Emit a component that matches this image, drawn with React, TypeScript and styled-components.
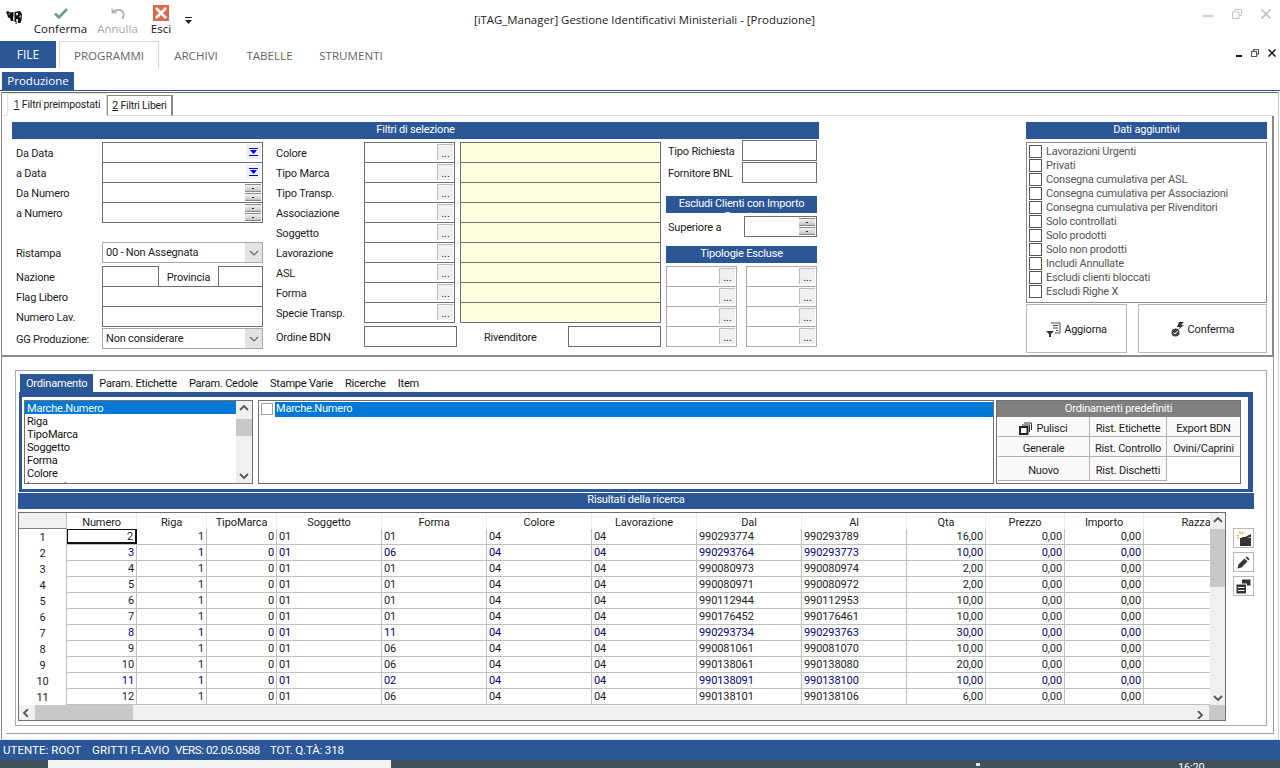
import React from "react";
import styled, { createGlobalStyle } from "styled-components";

const BLUE = "#2b5797";
const LINE = "#707070";
const WIDE_FONT = `"Open Sans", "Liberation Sans", sans-serif`;

const GlobalStyle = createGlobalStyle`
  html, body {
    margin: 0;
    padding: 0;
    background: #fff;
  }
  body {
    font-family: Roboto, "Liberation Sans", sans-serif;
    font-size: 11px;
    letter-spacing: -0.2px;
    color: #1c1c1c;
  }
  * {
    box-sizing: border-box;
  }
`;

const S = {
  Window: styled.div`
    width: 1280px;
    height: 768px;
    display: flex;
    flex-direction: column;
    overflow: hidden;
    background: #fff;
  `,
  TitleBar: styled.div`
    height: 41px;
    flex: none;
    position: relative;
    display: flex;
    align-items: flex-start;
    padding: 5px 0 0 6px;
    letter-spacing: 0;
  `,
  Logo: styled.div`
    width: 18px;
    margin: 6px 10px 0 0;
  `,
  QuickButton: styled.div<{ $off?: boolean; $w: number }>`
    width: ${(p) => p.$w}px;
    display: flex;
    flex-direction: column;
    align-items: center;
    height: 31px;
    justify-content: space-between;
    font-family: ${WIDE_FONT};
    line-height: 14px;
    font-size: 11.5px;
    white-space: nowrap;
    color: ${(p) => (p.$off ? "#a8a8a8" : "#111")};
  `,
  IconSlot: styled.div`
    height: 16px;
    display: flex;
    align-items: center;
    justify-content: center;
  `,
  Caret: styled.div`
    margin: 10px 0 0 11px;
    width: 8px;
  `,
  Title: styled.div`
    position: absolute;
    left: 0;
    right: 0;
    top: 12px;
    text-align: center;
    font-family: ${WIDE_FONT};
    font-size: 11.4px;
    padding-left: 9px;
    color: #222;
  `,
  WinButtons: styled.div`
    position: absolute;
    right: 9px;
    top: 9px;
    display: flex;
    gap: 19px;
    align-items: center;
  `,
  RibbonTabs: styled.div`
    height: 27px;
    flex: none;
    display: flex;
    align-items: stretch;
    position: relative;
    font-family: ${WIDE_FONT};
    letter-spacing: 0;
  `,
  FileTab: styled.div`
    width: 56px;
    background: ${BLUE};
    color: #fff;
    font-size: 12px;
    display: flex;
    align-items: center;
    justify-content: center;
    margin-right: 3px;
    padding-bottom: 1px;
  `,
  RibbonTab: styled.div<{ $on?: boolean; $w: number }>`
    width: ${(p) => p.$w}px;
    display: flex;
    align-items: center;
    justify-content: center;
    font-size: 11.6px;
    color: #666;
    border: 1px solid ${(p) => (p.$on ? "#d8d8d8" : "transparent")};
    border-bottom: none;
  `,
  MdiBar: styled.div`
    height: 23px;
    flex: none;
    display: flex;
    align-items: flex-end;
    padding: 0 0 0 2px;
    border-bottom: 1px solid ${BLUE};
  `,
  MdiTab: styled.div`
    width: 72px;
    height: 18px;
    background: ${BLUE};
    color: #fff;
    font-family: ${WIDE_FONT};
    font-size: 11.5px;
    letter-spacing: 0;
    line-height: 17px;
    text-align: center;
  `,
  MdiButtons: styled.div`
    position: absolute;
    right: 4px;
    top: 8px;
    display: flex;
    gap: 9px;
    align-items: flex-end;
  `,
  Form: styled.div`
    flex: 1;
    min-height: 0;
    display: flex;
    flex-direction: column;
    margin: 1px 1px 0 1px;
    padding: 0 4px 0 1px;
    border-top: 1px solid #6e6e6e;
    border-left: 1px solid #8a8a8a;
    border-right: 1px solid #d0d0d0;
    border-bottom: 1px solid #e4e4e4;
  `,
  PageTabs: styled.div`
    height: 23px;
    flex: none;
    display: flex;
    padding: 0 0 0 4px;
    border-bottom: 1px solid #e0e0e0;
  `,
  PageTab: styled.div<{ $on?: boolean; $w: number }>`
    width: ${(p) => p.$w}px;
    height: ${(p) => (p.$on ? 23 : 21)}px;
    margin-top: ${(p) => (p.$on ? 0 : 2)}px;
    line-height: ${(p) => (p.$on ? 21 : 19)}px;
    text-align: center;
    white-space: nowrap;
    font-size: 10.5px;
    background: #fff;
    border: 1px solid ${(p) => (p.$on ? "#e0e0e0" : "#8a8a8a")};
    border-right-width: ${(p) => (p.$on ? 1 : 2)}px;
    border-bottom-color: ${(p) => (p.$on ? "#fff" : "#e0e0e0")};
  `,
  FilterPanel: styled.div`
    height: 241px;
    flex: none;
    display: flex;
    justify-content: space-between;
    padding: 6px 5px 0 10px;
    border-right: 2px solid #8a8a8a;
    border-bottom: 2px solid #8a8a8a;
    margin-left: -1px;
  `,
  FilterMain: styled.div`
    width: 807px;
    display: flex;
    flex-direction: column;
  `,
  Band: styled.div<{ $lh?: number; $pt?: number; $mt?: number; $mr?: number }>`
    height: 17px;
    flex: none;
    background: ${BLUE};
    color: #fff;
    font-size: 11px;
    line-height: ${(p) => p.$lh ?? 15}px;
    padding-top: ${(p) => p.$pt ?? 0}px;
    margin-top: ${(p) => p.$mt ?? 0}px;
    margin-right: ${(p) => p.$mr ?? 0}px;
    text-align: center;
    overflow: hidden;
  `,
  FilterCols: styled.div`
    display: flex;
    flex: 1;
  `,
  ColA: styled.div`
    width: 251px;
    display: flex;
    flex-direction: column;
    padding-top: 3px;
  `,
  Row: styled.div<{ $h?: number; $mt?: number }>`
    height: ${(p) => p.$h ?? 20}px;
    margin-top: ${(p) => p.$mt ?? 0}px;
    display: flex;
    flex: none;
  `,
  Label: styled.div<{ $w?: number; $pl?: number }>`
    width: ${(p) => p.$w ?? 90}px;
    flex: none;
    padding-left: ${(p) => p.$pl ?? 4}px;
    line-height: 24px;
    white-space: nowrap;
  `,
  Field: styled.div<{ $w?: number; $bg?: string }>`
    ${(p) => (p.$w ? `width: ${p.$w}px; flex: none;` : "flex: 1;")}
    height: 21px;
    border: 1px solid ${LINE};
    background: ${(p) => p.$bg ?? "#fff"};
    display: flex;
    justify-content: flex-end;
    padding: 1px;
    & + & {
      margin-left: -1px;
    }
  `,
  DateDrop: styled.div`
    width: 15px;
    height: 15px;
    background: #eef1f6;
    display: flex;
    align-items: center;
    justify-content: center;
  `,
  Spin: styled.div`
    width: 16px;
    height: 17px;
    display: flex;
    flex-direction: column;
    gap: 1px;
    span {
      flex: 1;
      background: linear-gradient(#f4f4f4, #c4c4c4);
      border: 1px solid #8a8a8a;
      border-width: 1px 0 1px 0;
      position: relative;
    }
    span::after {
      content: "";
      position: absolute;
      left: 7px;
      top: 3px;
      width: 2px;
      height: 1px;
      background: #222;
    }
  `,
  Dots: styled.div`
    width: 16px;
    height: 16px;
    background: #f0f0f0;
    border-top: 1px solid #bdbdbd;
    border-left: 1px solid #bdbdbd;
    font-size: 11px;
    letter-spacing: 0;
    line-height: 17px;
    text-align: center;
    color: #222;
  `,
  Combo: styled.div`
    flex: 1;
    height: 21px;
    border: 1px solid #a8a8a8;
    display: flex;
    align-items: center;
    justify-content: space-between;
    padding-left: 3px;
  `,
  ComboArrow: styled.div`
    width: 17px;
    height: 19px;
    background: #e3e3e3;
    display: flex;
    align-items: center;
    justify-content: center;
  `,
  Middle: styled.div`
    flex: none;
    text-align: center;
    line-height: 24px;
    width: 59px;
  `,
  ColB: styled.div`
    width: 197px;
    display: flex;
    flex-direction: column;
    padding: 3px 0 0 9px;
  `,
  ColC: styled.div`
    width: 206px;
    display: flex;
    flex-direction: column;
    padding: 3px 0 0 0;
  `,
  ColD: styled.div`
    flex: 1;
    display: flex;
    flex-direction: column;
    padding-top: 1px;
  `,
  SmallBand: styled.div`
    margin: 12px 2px 3px 0;
  `,
  TipologieGrid: styled.div`
    display: grid;
    grid-template-columns: 71px 71px;
    justify-content: space-between;
    grid-auto-rows: 20px;
    margin: 3px 2px 0 0;
  `,
  LightField: styled.div`
    height: 21px;
    border: 1px solid #a8a8a8;
    display: flex;
    justify-content: flex-end;
    padding: 1px;
  `,
  Side: styled.div`
    width: 241px;
    display: flex;
    flex-direction: column;
  `,
  CheckBox: styled.div`
    height: 161px;
    margin-top: 3px;
    border: 1px solid #8a8a8a;
    padding: 2px 2px;
    display: flex;
    flex-direction: column;
  `,
  CheckRow: styled.div`
    height: 14px;
    display: flex;
    align-items: flex-start;
    gap: 4px;
    color: #555;
    white-space: nowrap;
  `,
  CheckMark: styled.div`
    width: 13px;
    height: 13px;
    border: 1px solid #555;
    flex: none;
  `,
  SideButtons: styled.div`
    display: flex;
    justify-content: space-between;
    margin-top: 1px;
    height: 49px;
  `,
  SideButton: styled.div<{ $w: number }>`
    width: ${(p) => p.$w}px;
    border: 1px solid #b8b8b8;
    display: flex;
    align-items: center;
    justify-content: center;
    gap: 3px;
    padding-top: 1px;
  `,
  ResultsOuter: styled.div`
    flex: none;
    height: 377px;
    padding: 13px 6px 7px 9px;
    border-bottom: 1px solid #a0a0a0;
    border-right: 1px solid #a0a0a0;
    margin-left: 3px;
    display: flex;
    flex-direction: column;
  `,
  ResultsPanel: styled.div`
    flex: 1;
    border: 1px solid #a8a8a8;
    padding: 3px 13px 0 3px;
    display: flex;
    flex-direction: column;
  `,
  SubTabs: styled.div`
    height: 18px;
    flex: none;
    display: flex;
    padding-left: 1px;
  `,
  SubTab: styled.div<{ $on?: boolean }>`
    padding: 0 6px;
    line-height: 19px;
    background: ${(p) => (p.$on ? BLUE : "transparent")};
    color: ${(p) => (p.$on ? "#fff" : "#111")};
  `,
  SortFrame: styled.div`
    height: 100px;
    flex: none;
    border: solid ${BLUE};
    border-width: 5px 5px 3px 3px;
    padding: 3px 7px 5px 2px;
    display: flex;
  `,
  ListBox: styled.div`
    width: 229px;
    flex: none;
    margin-right: 5px;
    border: 1px solid ${LINE};
    display: flex;
    overflow: hidden;
  `,
  ListItems: styled.div`
    flex: 1;
    padding: 0;
  `,
  ListItem: styled.div<{ $on?: boolean }>`
    height: 13px;
    line-height: 15px;
    padding-left: 2px;
    background: ${(p) => (p.$on ? "#0078d7" : "transparent")};
    color: ${(p) => (p.$on ? "#fff" : "#111")};
  `,
  VScroll: styled.div<{ $thumbTop: number; $thumbH: number }>`
    width: 16px;
    flex: none;
    background: #f0f0f0;
    position: relative;
    display: flex;
    flex-direction: column;
    justify-content: space-between;
    align-items: center;
    padding: 3px 0;
    &::after {
      content: "";
      position: absolute;
      left: 0;
      right: 0;
      top: ${(p) => p.$thumbTop}px;
      height: ${(p) => p.$thumbH}px;
      background: #c8c8c8;
    }
  `,
  Chosen: styled.div`
    width: 736px;
    flex: none;
    margin-right: 2px;
    border: 1px solid ${LINE};
    padding: 1px 0 1px 2px;
    display: flex;
    align-items: flex-start;
  `,
  ChosenCheck: styled.div`
    width: 12px;
    height: 12px;
    border: 1px solid #a0a0a0;
    margin: 1px 2px 0 0;
    flex: none;
  `,
  ChosenItem: styled.div`
    flex: 1;
    height: 15px;
    line-height: 14px;
    background: #0078d7;
    color: #fff;
    padding-left: 1px;
  `,
  Presets: styled.div`
    flex: 1;
    border: 1px solid ${LINE};
    display: flex;
    flex-direction: column;
  `,
  PresetHead: styled.div`
    height: 16px;
    flex: none;
    background: #808080;
    color: #fff;
    text-align: center;
    line-height: 15px;
  `,
  PresetGrid: styled.div`
    display: grid;
    grid-template-columns: 92px 77px 1fr;
    grid-template-rows: 20px 20px 24px;
    padding-left: 1px;
  `,
  PresetCell: styled.div<{ $blank?: boolean }>`
    display: flex;
    align-items: center;
    justify-content: center;
    gap: 4px;
    padding-top: 4px;
    background: #fafafa;
    border-right: 1px solid #b0b0b0;
    border-bottom: 1px solid #b0b0b0;
    &:nth-child(3n) {
      border-right: none;
    }
    ${(p) => (p.$blank ? "border-bottom: none; background: #fff;" : "")}
    white-space: nowrap;
  `,
  ResultsBand: styled.div`
    height: 16px;
    flex: none;
    margin: 1px -1px 0 -1px;
    background: ${BLUE};
    color: #fff;
    text-align: center;
    line-height: 14px;
  `,
  GridArea: styled.div`
    display: flex;
    margin: 3px 0 0 -1px;
    flex: none;
    letter-spacing: -0.1px;
  `,
  GridBox: styled.div`
    width: 1208px;
    height: 209px;
    flex: none;
    border: 1px solid ${LINE};
    display: flex;
    flex-direction: column;
    overflow: hidden;
  `,
  GridMain: styled.div`
    flex: 1;
    min-height: 0;
    display: flex;
  `,
  Table: styled.div`
    width: 1191px;
    flex: none;
    overflow: hidden;
  `,
  TableRow: styled.div<{ $blue?: boolean }>`
    height: 16px;
    display: flex;
    border-bottom: 1px solid #c0c0c0;
    color: ${(p) => (p.$blue ? "#00007f" : "#1c1c1c")};
  `,
  HeadRow: styled.div`
    height: 16px;
    display: flex;
  `,
  HeadCell: styled.div<{ $w: number; $corner?: boolean }>`
    width: ${(p) => p.$w}px;
    flex: none;
    text-align: center;
    line-height: 19px;
    white-space: nowrap;
    overflow: hidden;
    background: ${(p) => (p.$corner ? "#f0f0f0" : "#fff")};
    border-right: 1px solid ${(p) => (p.$corner ? "#c0c0c0" : "#f0f0f0")};
    border-bottom: 1px solid ${(p) => (p.$corner ? "#808080" : "#fff")};
  `,
  RowHead: styled.div<{ $w: number }>`
    width: ${(p) => p.$w}px;
    flex: none;
    text-align: center;
    line-height: 17px;
    color: #1c1c1c;
    background: #fff;
    margin-bottom: -1px;
    z-index: 1;
    border-right: 1px solid #c0c0c0;
  `,
  Cell: styled.div<{ $w: number; $right?: boolean; $focus?: boolean }>`
    width: ${(p) => p.$w}px;
    flex: none;
    line-height: 16px;
    white-space: nowrap;
    text-align: ${(p) => (p.$right ? "right" : "left")};
    padding: 0 ${(p) => (p.$right ? 2 : 0)}px 0 ${(p) => (p.$right ? 0 : 2)}px;
    border-right: 1px solid #c0c0c0;
    ${(p) =>
      p.$focus
        ? "border: 1px solid #111; border-right-width: 2px; border-bottom-width: 2px; line-height: 14px;"
        : ""}
  `,
  HScroll: styled.div`
    height: 15px;
    flex: none;
    background: #f0f0f0;
    display: flex;
    align-items: center;
    position: relative;
    padding: 0 0 0 3px;
  `,
  HThumb: styled.div`
    position: absolute;
    left: 16px;
    top: 0;
    width: 98px;
    height: 15px;
    background: #c8c8c8;
  `,
  HRight: styled.div`
    position: absolute;
    right: 20px;
    top: 4px;
  `,
  HCorner: styled.div`
    position: absolute;
    right: 0;
    top: 0;
    width: 16px;
    height: 15px;
    background: #c8c8c8;
  `,
  ToolColumn: styled.div`
    flex: 1;
    display: flex;
    flex-direction: column;
    gap: 4px;
    padding: 16px 0 0 7px;
  `,
  ToolButton: styled.div`
    width: 21px;
    height: 20px;
    border: 1px solid #b8b8b8;
    display: flex;
    align-items: center;
    justify-content: center;
  `,
  StatusBar: styled.div`
    height: 20px;
    flex: none;
    background: ${BLUE};
    color: #fff;
    font-size: 11.5px;
    line-height: 20px;
    padding-left: 3px;
    display: flex;
    white-space: nowrap;
  `,
  StatusItem: styled.span<{ $w?: number; $ls: number }>`
    ${(p) => (p.$w ? `width: ${p.$w}px;` : "")}
    letter-spacing: ${(p) => p.$ls}px;
  `,
  Taskbar: styled.div`
    height: 8px;
    flex: none;
    background: #3f5159;
    display: flex;
    overflow: hidden;
    position: relative;
    color: #fff;
  `,
  TaskWindow: styled.div`
    width: 343px;
    height: 8px;
    margin-left: 48px;
    background: #f2f2f2;
  `,
  Clock: styled.div`
    position: absolute;
    left: 1178px;
    top: 1px;
    line-height: 14px;
  `,
  TaskMark: styled.div`
    position: absolute;
    left: 976px;
    top: 3px;
    width: 4px;
    height: 3px;
    background: #dfe3e5;
  `,
};

const COLS = [48, 70, 70, 70, 105, 105, 105, 105, 105, 105, 79, 79, 79, 105];
const HEADS = ["", "Numero", "Riga", "TipoMarca", "Soggetto", "Forma", "Colore", "Lavorazione", "Dal", "Al", "Qta", "Prezzo", "Importo", "Razza"];

const ROWS: { n: string; forma: string; dal: string; al: string; qta: string; blue?: boolean }[] = [
  { n: "2", forma: "01", dal: "990293774", al: "990293789", qta: "16,00" },
  { n: "3", forma: "06", dal: "990293764", al: "990293773", qta: "10,00", blue: true },
  { n: "4", forma: "01", dal: "990080973", al: "990080974", qta: "2,00" },
  { n: "5", forma: "01", dal: "990080971", al: "990080972", qta: "2,00" },
  { n: "6", forma: "01", dal: "990112944", al: "990112953", qta: "10,00" },
  { n: "7", forma: "01", dal: "990176452", al: "990176461", qta: "10,00" },
  { n: "8", forma: "11", dal: "990293734", al: "990293763", qta: "30,00", blue: true },
  { n: "9", forma: "06", dal: "990081061", al: "990081070", qta: "10,00" },
  { n: "10", forma: "06", dal: "990138061", al: "990138080", qta: "20,00" },
  { n: "11", forma: "02", dal: "990138091", al: "990138100", qta: "10,00", blue: true },
  { n: "12", forma: "06", dal: "990138101", al: "990138106", qta: "6,00" },
];

const CHECKS = [
  "Lavorazioni Urgenti",
  "Privati",
  "Consegna cumulativa per ASL",
  "Consegna cumulativa per Associazioni",
  "Consegna cumulativa per Rivenditori",
  "Solo controllati",
  "Solo prodotti",
  "Solo non prodotti",
  "Includi Annullate",
  "Escludi clienti bloccati",
  "Escludi Righe X",
];

const LOOKUPS = ["Colore", "Tipo Marca", "Tipo Transp.", "Associazione", "Soggetto", "Lavorazione", "ASL", "Forma", "Specie Transp."];

const Chevron = ({ dir, color = "#555" }: { dir: "up" | "down" | "left" | "right"; color?: string }) => {
  const d = {
    up: "M1 6 L5 2 L9 6",
    down: "M1 2 L5 6 L9 2",
    left: "M6 0 L2 4 L6 8",
    right: "M3 0 L7 4 L3 8",
  }[dir];
  return (
    <svg width="10" height="8" viewBox="0 0 10 8" style={{ zIndex: 1 }}>
      <path d={d} fill="none" stroke={color} strokeWidth="1.8" />
    </svg>
  );
};

const CowLogo = () => (
  <svg width="16" height="13" viewBox="0 0 16 13">
    <path d="M0 1 L2 0 L4 1.5 L7.5 1 L7.5 5 L7 7 L7.5 10 L5 10 L4 7 L2 6.5 L1 3 Z" fill="#111" />
    <path d="M8.5 1 L14 0 L16 3 L15.5 9 L14.5 12 L12 12 L12 8 L10.5 8 L10 11 L8.5 11 L8.5 6 Z" fill="#111" />
    <path d="M10 2 L12 2 L12 4 L10.5 4.5 Z M13.5 5 L15 4 L14.5 6.5 L13.5 6.5 Z M2.5 2 L4 3 L3.2 4 Z" fill="#fff" />
    <path d="M10 10 L11.5 10 L11 13 L9 13 Z" fill="#8a8a3a" />
  </svg>
);

const CheckIcon = () => (
  <svg width="14" height="11" viewBox="0 0 14 11">
    <path d="M1 5.5 L5 9.5 L13 1" fill="none" stroke="#6a9f8d" strokeWidth="2.6" />
  </svg>
);

const UndoIcon = () => (
  <svg width="14" height="11" viewBox="0 0 14 11">
    <path d="M0.5 0 L0.5 5.5 L6 5.5 Z" fill="#b4b4b4" />
    <path d="M2.5 4 C5.5 1 12 1 12.6 6 C12.8 8 12.2 9.5 11.2 11" fill="none" stroke="#b4b4b4" strokeWidth="2" />
  </svg>
);

const ExitIcon = () => (
  <svg width="16" height="16" viewBox="0 0 16 16">
    <rect width="16" height="16" fill="#e0674c" />
    <path d="M3 3 L13 13 M13 3 L3 13" stroke="#fff" strokeWidth="2.8" />
  </svg>
);

const RestoreIcon = ({ color, size }: { color: string; size: number }) => (
  <svg width={size} height={size} viewBox="0 0 10 10">
    <path d="M3 2.5 V0.5 H9.5 V6.5 H7.5 M0.5 3 H7 V9.5 H0.5 Z" fill="none" stroke={color} strokeWidth="1" />
  </svg>
);

const DateArrow = () => (
  <svg width="9" height="8" viewBox="0 0 9 8">
    <path d="M0 0 H9 V1 H0 Z M1 2 H8 L4.5 6 Z M0 7 H9 V8 H0 Z" fill="#0000e0" />
  </svg>
);

const ComboChevron = () => (
  <svg width="10" height="6" viewBox="0 0 10 6">
    <path d="M1 1 L5 5 L9 1" fill="none" stroke="#666" strokeWidth="1.2" />
  </svg>
);

const FilterIcon = () => (
  <svg width="15" height="15" viewBox="0 0 15 15">
    <path d="M0 9 H8 L5 12 V15 H3 V12 Z" fill="#333" />
    <path d="M5 1 H14 V11 H9 M7 3.5 H12 M7 6 H12 M10 8.5 H12" fill="none" stroke="#444" strokeWidth="1" />
  </svg>
);

const ConfirmIcon = () => (
  <svg width="14" height="15" viewBox="0 0 14 15">
    <path d="M8 0 L13 0 L10 3 L13 3 L7 8 L9 5 L6 5 Z" fill="#333" />
    <circle cx="4.5" cy="10.5" r="4" fill="#444" />
    <path d="M2.5 10.5 L4 12 L7 8.8" fill="none" stroke="#fff" strokeWidth="1" />
  </svg>
);

const StackIcon = () => (
  <svg width="13" height="13" viewBox="0 0 13 13">
    <path d="M5 1 H12.5 V8 M3 3 H10.5 V10" fill="none" stroke="#333" strokeWidth="1" />
    <rect x="1" y="5" width="7.5" height="7" fill="none" stroke="#222" strokeWidth="2" />
  </svg>
);

const NewIcon = () => (
  <svg width="16" height="15" viewBox="0 0 16 15">
    <path d="M0.5 4 L3 4.5 M1 7 L3 6.5 M3.5 0.5 L4.5 3 M7 0.5 L6 3" stroke="#e8a23c" strokeWidth="1.2" />
    <path d="M4 7 H15 V15 H4 Z" fill="#333" />
    <path d="M6 6 L9 6 L15 3 L15 6 L11 7 H6 Z" fill="#333" />
  </svg>
);

const PencilIcon = () => (
  <svg width="13" height="13" viewBox="0 0 13 13">
    <path d="M0.5 12.5 L1.5 8.5 L7.5 2.5 L10.5 5.5 L4.5 11.5 Z" fill="#333" />
    <path d="M8.5 1.5 L9.8 0.5 L12.5 3 L11.5 4.5 Z" fill="#333" />
  </svg>
);

const CardsIcon = () => (
  <svg width="15" height="15" viewBox="0 0 15 15">
    <path d="M6 0.5 H14.5 V6.5 H11 V4.5 H6 Z" fill="#333" />
    <path d="M0.5 5.5 H10 V14.5 H0.5 Z" fill="#333" />
    <path d="M2 8.5 H8.5 M2 11.5 H8.5" stroke="#fff" strokeWidth="1.2" />
  </svg>
);

const App = () => (
  <S.Window>
    <GlobalStyle />
    <S.TitleBar>
      <S.Logo>
        <CowLogo />
      </S.Logo>
      <S.QuickButton $w={53}>
        <S.IconSlot>
          <CheckIcon />
        </S.IconSlot>
        <span>Conferma</span>
      </S.QuickButton>
      <S.QuickButton $w={61} $off>
        <S.IconSlot>
          <UndoIcon />
        </S.IconSlot>
        <span>Annulla</span>
      </S.QuickButton>
      <S.QuickButton $w={26}>
        <ExitIcon />
        <span>Esci</span>
      </S.QuickButton>
      <S.Caret>
        <svg width="7" height="8" viewBox="0 0 7 8">
          <path d="M0 0 H7 V1 H0 Z M0 3 H7 L3.5 7 Z" fill="#222" />
        </svg>
      </S.Caret>
      <S.Title>[iTAG_Manager] Gestione Identificativi Ministeriali - [Produzione]</S.Title>
      <S.WinButtons>
        <svg width="10" height="2" viewBox="0 0 10 2" style={{ marginTop: 4 }}>
          <rect width="10" height="2" fill="#cfcfcf" />
        </svg>
        <RestoreIcon color="#c4c4c4" size={10} />
        <svg width="10" height="10" viewBox="0 0 10 10">
          <path d="M0.5 0.5 L9.5 9.5 M9.5 0.5 L0.5 9.5" stroke="#c4c4c4" strokeWidth="1.8" />
        </svg>
      </S.WinButtons>
    </S.TitleBar>
    <S.RibbonTabs>
      <S.FileTab>FILE</S.FileTab>
      <S.RibbonTab $w={100} $on>PROGRAMMI</S.RibbonTab>
      <S.RibbonTab $w={74}>ARCHIVI</S.RibbonTab>
      <S.RibbonTab $w={73}>TABELLE</S.RibbonTab>
      <S.RibbonTab $w={90}>STRUMENTI</S.RibbonTab>
      <S.MdiButtons>
        <svg width="6" height="2" viewBox="0 0 6 2">
          <rect width="6" height="2" fill="#111" />
        </svg>
        <RestoreIcon color="#111" size={8} />
        <svg width="8" height="8" viewBox="0 0 8 8">
          <path d="M0.5 0.5 L7.5 7.5 M7.5 0.5 L0.5 7.5" stroke="#111" strokeWidth="1.5" />
        </svg>
      </S.MdiButtons>
    </S.RibbonTabs>
    <S.MdiBar>
      <S.MdiTab>Produzione</S.MdiTab>
    </S.MdiBar>
    <S.Form>
      <S.PageTabs>
        <S.PageTab $w={100} $on>
          <u>1</u> Filtri preimpostati
        </S.PageTab>
        <S.PageTab $w={66}>
          <u>2</u> Filtri Liberi
        </S.PageTab>
      </S.PageTabs>
      <S.FilterPanel>
        <S.FilterMain>
          <S.Band>Filtri di selezione</S.Band>
          <S.FilterCols>
            <S.ColA>
              <S.Row>
                <S.Label>Da Data</S.Label>
                <S.Field>
                  <S.DateDrop>
                    <DateArrow />
                  </S.DateDrop>
                </S.Field>
              </S.Row>
              <S.Row>
                <S.Label>a Data</S.Label>
                <S.Field>
                  <S.DateDrop>
                    <DateArrow />
                  </S.DateDrop>
                </S.Field>
              </S.Row>
              <S.Row>
                <S.Label>Da Numero</S.Label>
                <S.Field>
                  <S.Spin>
                    <span />
                    <span />
                  </S.Spin>
                </S.Field>
              </S.Row>
              <S.Row>
                <S.Label>a Numero</S.Label>
                <S.Field>
                  <S.Spin>
                    <span />
                    <span />
                  </S.Spin>
                </S.Field>
              </S.Row>
              <S.Row $h={21} $mt={20}>
                <S.Label>Ristampa</S.Label>
                <S.Combo>
                  00 - Non Assegnata
                  <S.ComboArrow>
                    <ComboChevron />
                  </S.ComboArrow>
                </S.Combo>
              </S.Row>
              <S.Row $mt={3}>
                <S.Label>Nazione</S.Label>
                <S.Field $w={57} />
                <S.Middle>Provincia</S.Middle>
                <S.Field />
              </S.Row>
              <S.Row>
                <S.Label>Flag Libero</S.Label>
                <S.Field />
              </S.Row>
              <S.Row>
                <S.Label>Numero Lav.</S.Label>
                <S.Field />
              </S.Row>
              <S.Row $h={21} $mt={2}>
                <S.Label>GG Produzione:</S.Label>
                <S.Combo>
                  Non considerare
                  <S.ComboArrow>
                    <ComboChevron />
                  </S.ComboArrow>
                </S.Combo>
              </S.Row>
            </S.ColA>
            <S.ColB>
              {LOOKUPS.map((name) => (
                <S.Row key={name}>
                  <S.Label $w={92} $pl={4}>{name}</S.Label>
                  <S.Field $w={91}>
                    <S.Dots>...</S.Dots>
                  </S.Field>
                </S.Row>
              ))}
              <S.Row $mt={4}>
                <S.Label $w={92} $pl={4}>Ordine BDN</S.Label>
                <S.Field $w={93} />
              </S.Row>
            </S.ColB>
            <S.ColC>
              {LOOKUPS.map((name) => (
                <S.Row key={name}>
                  <S.Field $w={201} $bg="#ffffe1" />
                </S.Row>
              ))}
              <S.Row $mt={4}>
                <S.Label $w={108} $pl={24}>Rivenditore</S.Label>
                <S.Field $w={93} />
              </S.Row>
            </S.ColC>
            <S.ColD>
              <S.Row $h={22}>
                <S.Label $w={76} $pl={2}>Tipo Richiesta</S.Label>
                <S.Field $w={75} />
              </S.Row>
              <S.Row $h={22}>
                <S.Label $w={76} $pl={2}>Fornitore BNL</S.Label>
                <S.Field $w={75} />
              </S.Row>
              <S.SmallBand>
                <S.Band $lh={13} $pt={1}>
                  Escludi Clienti con Importo
                  <br />
                  Dovuto
                </S.Band>
              </S.SmallBand>
              <S.Row $h={21}>
                <S.Label $w={78} $pl={2}>Superiore a</S.Label>
                <S.Field $w={73}>
                  <S.Spin>
                    <span />
                    <span />
                  </S.Spin>
                </S.Field>
              </S.Row>
              <S.Band $mt={9} $mr={2}>Tipologie Escluse</S.Band>
              <S.TipologieGrid>
                {Array.from({ length: 8 }, (_, i) => (
                  <S.LightField key={i}>
                    <S.Dots>...</S.Dots>
                  </S.LightField>
                ))}
              </S.TipologieGrid>
            </S.ColD>
          </S.FilterCols>
        </S.FilterMain>
        <S.Side>
          <S.Band>Dati aggiuntivi</S.Band>
          <S.CheckBox>
            {CHECKS.map((c) => (
              <S.CheckRow key={c}>
                <S.CheckMark />
                {c}
              </S.CheckRow>
            ))}
          </S.CheckBox>
          <S.SideButtons>
            <S.SideButton $w={101}>
              <FilterIcon />
              Aggiorna
            </S.SideButton>
            <S.SideButton $w={129}>
              <ConfirmIcon />
              Conferma
            </S.SideButton>
          </S.SideButtons>
        </S.Side>
      </S.FilterPanel>
      <S.ResultsOuter>
        <S.ResultsPanel>
          <S.SubTabs>
            <S.SubTab $on>Ordinamento</S.SubTab>
            <S.SubTab>Param. Etichette</S.SubTab>
            <S.SubTab>Param. Cedole</S.SubTab>
            <S.SubTab>Stampe Varie</S.SubTab>
            <S.SubTab>Ricerche</S.SubTab>
            <S.SubTab>Item</S.SubTab>
          </S.SubTabs>
          <S.SortFrame>
            <S.ListBox>
              <S.ListItems>
                <S.ListItem $on>Marche.Numero</S.ListItem>
                <S.ListItem>Riga</S.ListItem>
                <S.ListItem>TipoMarca</S.ListItem>
                <S.ListItem>Soggetto</S.ListItem>
                <S.ListItem>Forma</S.ListItem>
                <S.ListItem>Colore</S.ListItem>
                <S.ListItem>Lavorazione</S.ListItem>
              </S.ListItems>
              <S.VScroll $thumbTop={18} $thumbH={17}>
                <Chevron dir="up" />
                <Chevron dir="down" />
              </S.VScroll>
            </S.ListBox>
            <S.Chosen>
              <S.ChosenCheck />
              <S.ChosenItem>Marche.Numero</S.ChosenItem>
            </S.Chosen>
            <S.Presets>
              <S.PresetHead>Ordinamenti predefiniti</S.PresetHead>
              <S.PresetGrid>
                <S.PresetCell>
                  <StackIcon />
                  Pulisci
                </S.PresetCell>
                <S.PresetCell>Rist. Etichette</S.PresetCell>
                <S.PresetCell>Export BDN</S.PresetCell>
                <S.PresetCell>Generale</S.PresetCell>
                <S.PresetCell>Rist. Controllo</S.PresetCell>
                <S.PresetCell>Ovini/Caprini</S.PresetCell>
                <S.PresetCell>Nuovo</S.PresetCell>
                <S.PresetCell>Rist. Dischetti</S.PresetCell>
                <S.PresetCell $blank />
              </S.PresetGrid>
            </S.Presets>
          </S.SortFrame>
          <S.ResultsBand>Risultati della ricerca</S.ResultsBand>
          <S.GridArea>
            <S.GridBox>
              <S.GridMain>
                <S.Table>
                  <S.HeadRow>
                    {HEADS.map((h, i) => (
                      <S.HeadCell key={i} $w={COLS[i]} $corner={i === 0}>
                        {h}
                      </S.HeadCell>
                    ))}
                  </S.HeadRow>
                  {ROWS.map((r, i) => {
                    const values = [r.n, "1", "0", "01", r.forma, "04", "04", r.dal, r.al, r.qta, "0,00", "0,00", ""];
                    return (
                      <S.TableRow key={r.n} $blue={r.blue}>
                        <S.RowHead $w={COLS[0]}>{i + 1}</S.RowHead>
                        {values.map((v, j) => (
                          <S.Cell
                            key={j}
                            $w={COLS[j + 1]}
                            $right={j < 3 || (j >= 9 && j < 12)}
                            $focus={i === 0 && j === 0}
                          >
                            {v}
                          </S.Cell>
                        ))}
                      </S.TableRow>
                    );
                  })}
                </S.Table>
                <S.VScroll $thumbTop={16} $thumbH={58}>
                  <Chevron dir="up" />
                  <Chevron dir="down" />
                </S.VScroll>
              </S.GridMain>
              <S.HScroll>
                <Chevron dir="left" />
                <S.HThumb />
                <S.HRight>
                  <Chevron dir="right" />
                </S.HRight>
                <S.HCorner />
              </S.HScroll>
            </S.GridBox>
            <S.ToolColumn>
              <S.ToolButton>
                <NewIcon />
              </S.ToolButton>
              <S.ToolButton>
                <PencilIcon />
              </S.ToolButton>
              <S.ToolButton>
                <CardsIcon />
              </S.ToolButton>
            </S.ToolColumn>
          </S.GridArea>
        </S.ResultsPanel>
      </S.ResultsOuter>
    </S.Form>
    <S.StatusBar>
      <S.StatusItem $w={89} $ls={0.05}>UTENTE: ROOT</S.StatusItem>
      <S.StatusItem $w={83} $ls={0.15}>GRITTI FLAVIO</S.StatusItem>
      <S.StatusItem $w={95} $ls={-0.4}>VERS: 02.05.0588</S.StatusItem>
      <S.StatusItem $ls={-0.15}>TOT. Q.TÀ: 318</S.StatusItem>
    </S.StatusBar>
    <S.Taskbar>
      <S.TaskWindow />
      <S.TaskMark />
      <S.Clock>16:20</S.Clock>
    </S.Taskbar>
  </S.Window>
);

export default App;
